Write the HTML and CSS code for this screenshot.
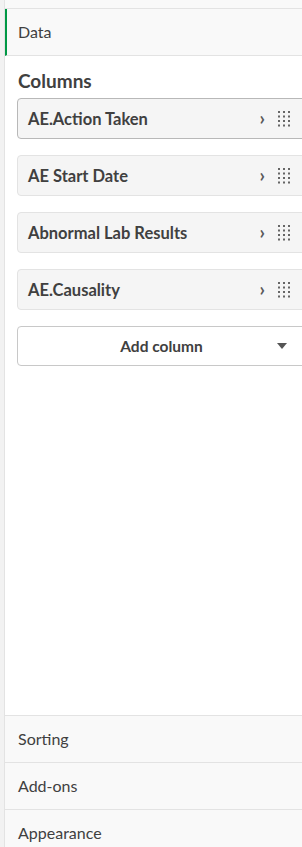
FILE: index.html
```html
<!DOCTYPE html>
<html lang="en">
<head>
    <meta charset="UTF-8">
    <meta name="viewport" content="width=device-width, initial-scale=1.0">
    <title>Properties</title>
    <link rel="stylesheet" href="styles.css">
</head>
<body>
    <div class="page">
        <div class="gutter"></div>
        <div class="panel">
            <div class="top-band"></div>
            <div class="tab tab-active">Data</div>

            <div class="content">
                <h2 class="section-title">Columns</h2>

                <div class="col-item selected">
                    <span class="col-name">AE.Action Taken</span>
                    <span class="chev">&#8250;</span>
                    <svg class="grip" width="12" height="16" viewBox="0 0 12 16">
                        <g fill="#666">
                            <rect x="0" y="0" width="2" height="2"/><rect x="5" y="0" width="2" height="2"/><rect x="10" y="0" width="2" height="2"/>
                            <rect x="0" y="4.5" width="2" height="2"/><rect x="5" y="4.5" width="2" height="2"/><rect x="10" y="4.5" width="2" height="2"/>
                            <rect x="0" y="9" width="2" height="2"/><rect x="5" y="9" width="2" height="2"/><rect x="10" y="9" width="2" height="2"/>
                            <rect x="0" y="13.5" width="2" height="2"/><rect x="5" y="13.5" width="2" height="2"/><rect x="10" y="13.5" width="2" height="2"/>
                        </g>
                    </svg>
                </div>

                <div class="col-item">
                    <span class="col-name">AE Start Date</span>
                    <span class="chev">&#8250;</span>
                    <svg class="grip" width="12" height="16" viewBox="0 0 12 16">
                        <g fill="#666">
                            <rect x="0" y="0" width="2" height="2"/><rect x="5" y="0" width="2" height="2"/><rect x="10" y="0" width="2" height="2"/>
                            <rect x="0" y="4.5" width="2" height="2"/><rect x="5" y="4.5" width="2" height="2"/><rect x="10" y="4.5" width="2" height="2"/>
                            <rect x="0" y="9" width="2" height="2"/><rect x="5" y="9" width="2" height="2"/><rect x="10" y="9" width="2" height="2"/>
                            <rect x="0" y="13.5" width="2" height="2"/><rect x="5" y="13.5" width="2" height="2"/><rect x="10" y="13.5" width="2" height="2"/>
                        </g>
                    </svg>
                </div>

                <div class="col-item">
                    <span class="col-name">Abnormal Lab Results</span>
                    <span class="chev">&#8250;</span>
                    <svg class="grip" width="12" height="16" viewBox="0 0 12 16">
                        <g fill="#666">
                            <rect x="0" y="0" width="2" height="2"/><rect x="5" y="0" width="2" height="2"/><rect x="10" y="0" width="2" height="2"/>
                            <rect x="0" y="4.5" width="2" height="2"/><rect x="5" y="4.5" width="2" height="2"/><rect x="10" y="4.5" width="2" height="2"/>
                            <rect x="0" y="9" width="2" height="2"/><rect x="5" y="9" width="2" height="2"/><rect x="10" y="9" width="2" height="2"/>
                            <rect x="0" y="13.5" width="2" height="2"/><rect x="5" y="13.5" width="2" height="2"/><rect x="10" y="13.5" width="2" height="2"/>
                        </g>
                    </svg>
                </div>

                <div class="col-item">
                    <span class="col-name">AE.Causality</span>
                    <span class="chev">&#8250;</span>
                    <svg class="grip" width="12" height="16" viewBox="0 0 12 16">
                        <g fill="#666">
                            <rect x="0" y="0" width="2" height="2"/><rect x="5" y="0" width="2" height="2"/><rect x="10" y="0" width="2" height="2"/>
                            <rect x="0" y="4.5" width="2" height="2"/><rect x="5" y="4.5" width="2" height="2"/><rect x="10" y="4.5" width="2" height="2"/>
                            <rect x="0" y="9" width="2" height="2"/><rect x="5" y="9" width="2" height="2"/><rect x="10" y="9" width="2" height="2"/>
                            <rect x="0" y="13.5" width="2" height="2"/><rect x="5" y="13.5" width="2" height="2"/><rect x="10" y="13.5" width="2" height="2"/>
                        </g>
                    </svg>
                </div>

                <button class="add-btn">
                    <span>Add column</span>
                    <svg class="caret" width="10" height="6" viewBox="0 0 10 6"><path d="M0 0 H10 L5 6 Z" fill="#555"/></svg>
                </button>
            </div>

            <div class="tab">Sorting</div>
            <div class="tab">Add-ons</div>
            <div class="tab">Appearance</div>
        </div>
    </div>
</body>
</html>
```

FILE: styles.css
```css
body {
    margin: 0;
    overflow: hidden;
    font-family: Lato, "Open Sans", sans-serif;
    color: #404040;
    background: white;
}
.page {
    display: flex;
    height: 857px;
    width: 306px;
}
.gutter {
    width: 4px;
    background: #f2f2f2;
    border-right: 1px solid #e3e3e3;
}
.panel {
    flex: 1;
    display: flex;
    flex-direction: column;
}
.top-band {
    height: 8px;
    background: #f9f9f9;
    border-bottom: 1px solid #e3e3e3;
}
.tab {
    height: 44px;
    padding-bottom: 2px;
    display: flex;
    align-items: center;
    padding-left: 13px;
    font-size: 16px;
    background: #f9f9f9;
    border-bottom: 1px solid #e3e3e3;
    flex-shrink: 0;
}
.tab-active {
    border-left: 2px solid #009845;
    padding-left: 11px;
}
.content {
    flex: 1;
    padding: 0 0 0 12px;
    border-bottom: 1px solid #e3e3e3;
}
.section-title {
    font-size: 19px;
    font-weight: bold;
    margin: 15px 0 7px 1px;
    line-height: 20px;
}
.col-item {
    display: flex;
    align-items: center;
    height: 39px;
    margin-bottom: 16px;
    padding: 0 10px;
    background: #f5f5f5;
    border: 1px solid #e3e3e3;
    border-radius: 4px;
}
.col-item.selected {
    border-color: #b8b8b8;
}
.col-name {
    flex: 1;
    font-size: 16.5px;
    font-weight: bold;
}
.chev {
    font-size: 19px;
    font-weight: bold;
    color: #595959;
    margin-right: 13px;
    margin-top: -2px;
}
.grip {
    margin-right: 5px;
}
.add-btn {
    display: flex;
    align-items: center;
    justify-content: center;
    position: relative;
    width: 100%;
    height: 40px;
    background: white;
    border: 1px solid #c8c8c8;
    border-radius: 4px;
    font-family: inherit;
    font-size: 15.5px;
    font-weight: bold;
    color: #404040;
}
.caret {
    position: absolute;
    right: 18px;
    top: 16px;
}
```
